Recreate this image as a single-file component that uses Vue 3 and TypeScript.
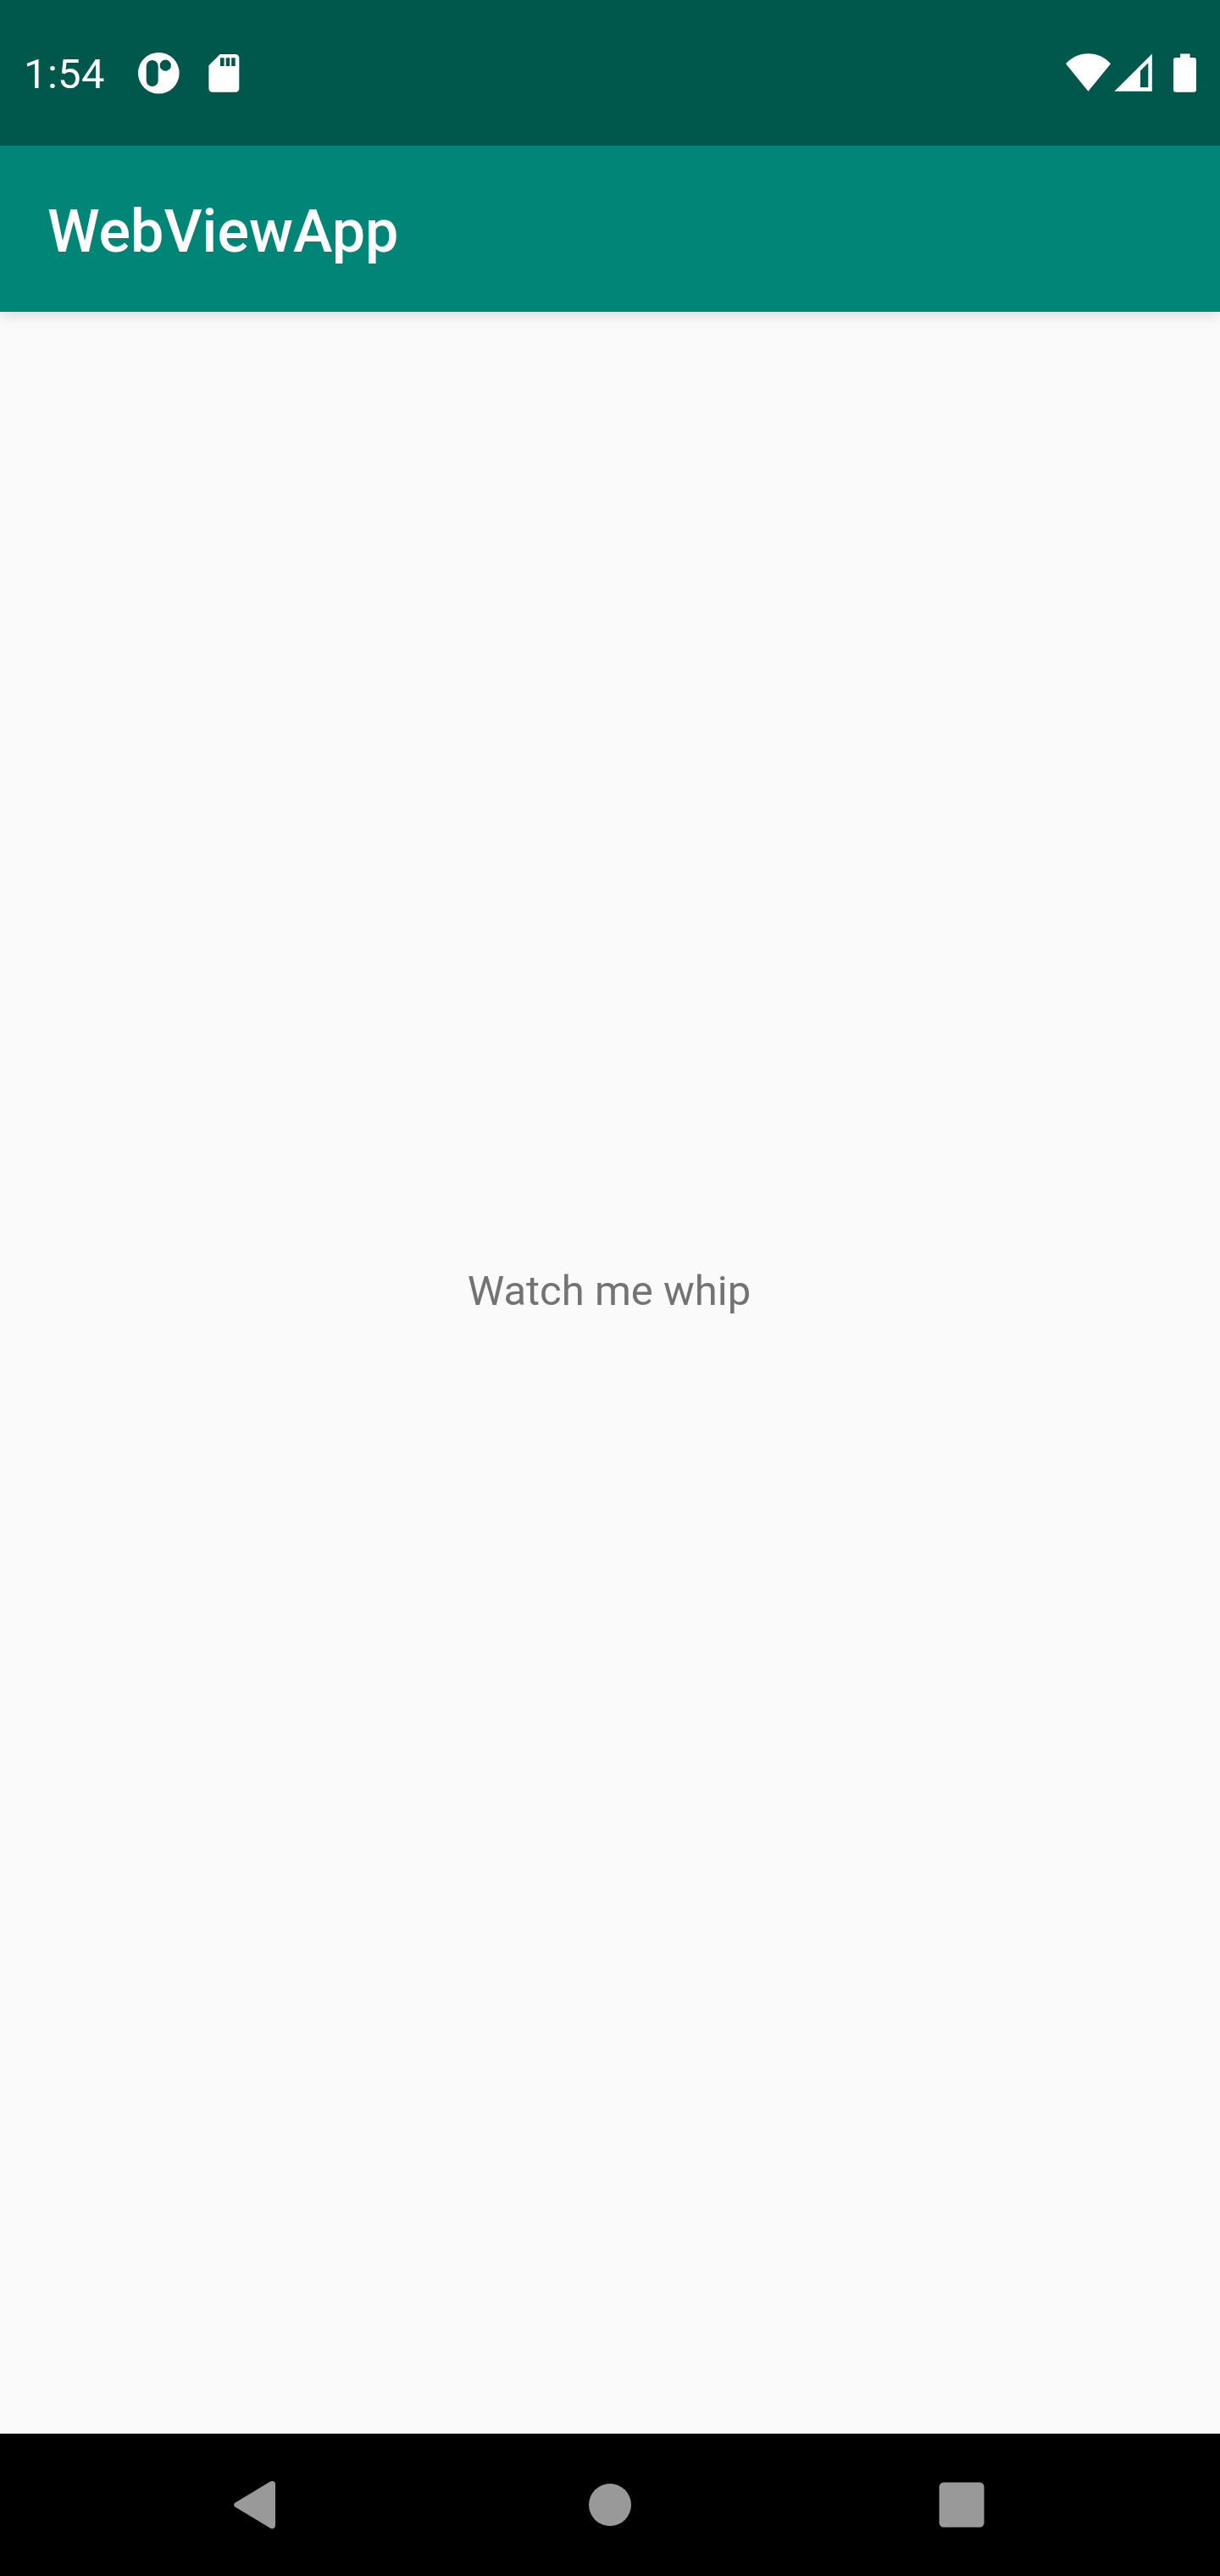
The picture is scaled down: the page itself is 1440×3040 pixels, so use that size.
<script setup lang="ts">
const time = '1:54'
const title = 'WebViewApp'
const message = 'Watch me whip'
</script>

<template>
  <div class="screen">
    <header class="status-bar">
      <div class="group">
        <span class="time">{{ time }}</span>
        <svg class="app-icon" width="50" height="50" viewBox="162 61 50 50">
          <path fill-rule="evenodd" d="M187.3 62a24.3 24.3 0 1 1 0 48.6a24.3 24.3 0 1 1 0-48.6zM179.7 71a7 7 0 0 0-7 7v17a7 7 0 0 0 14 0v-17a7 7 0 0 0-7-7zM195.3 70.6a6.6 6.6 0 1 0 0 13.2a6.6 6.6 0 1 0 0-13.2z" />
        </svg>
        <svg class="sd-icon" width="38" height="50" viewBox="245 61 38 50">
          <path fill-rule="evenodd" d="M259.7 64H278a4.3 4.3 0 0 1 4.3 4.3V104.4a4.3 4.3 0 0 1-4.3 4.3H250.7a4.3 4.3 0 0 1-4.3-4.3V77.3zM260 68.3V78h4.6V68.3zM266.7 68.3V78h4.5V68.3zM273.2 68.3V78h4.5V68.3z" />
        </svg>
      </div>
      <div class="group">
        <svg width="55" height="50" viewBox="1257 61 55 50">
          <path d="M1284.4 107.7L1258 75.2C1265 67.5 1274 63.3 1284.4 63.3S1304 67.5 1311 75.2z" />
        </svg>
        <svg class="signal-icon" width="46" height="50" viewBox="1315 61 46 50">
          <path fill-rule="evenodd" d="M1315.4 107.8L1359.8 63.4V107.8zM1346 83.6V103H1355.3V74.3z" />
        </svg>
        <svg class="battery-icon" width="29" height="50" viewBox="1384 61 29 50">
          <path d="M1393 63.4h11.6V68h4.4a3 3 0 0 1 3 3v34.7a3 3 0 0 1-3 3h-21a3 3 0 0 1-3-3V71a3 3 0 0 1 3-3h5z" />
        </svg>
      </div>
    </header>

    <div class="app-bar">
      <h1 class="title">{{ title }}</h1>
    </div>

    <main class="content">
      <p class="message">{{ message }}</p>
    </main>

    <nav class="nav-bar">
      <svg class="back" width="52" height="60" viewBox="275 2926 52 60">
        <path d="M277.6 2953.4L319 2928.6Q325 2926.5 325 2932.5V2979.5Q325 2985.5 319 2983.4L277.6 2958.6Q274.4 2956 277.6 2953.4z" />
      </svg>
      <svg class="home" width="52" height="60" viewBox="694 2926 52 60">
        <circle cx="720" cy="2956" r="25" />
      </svg>
      <svg class="recents" width="56" height="60" viewBox="1107 2926 56 60">
        <rect x="1108.6" y="2929.4" width="53" height="53" rx="5.2" />
      </svg>
    </nav>
  </div>
</template>

<style>
body {
  margin: 0;
  background: #fafafa;
}
</style>

<style scoped>
.screen {
  display: flex;
  flex-direction: column;
  width: 1440px;
  height: 3040px;
  overflow: hidden;
  background: #fafafa;
  font-family: Roboto, 'Liberation Sans', sans-serif;
}

svg {
  display: block;
  flex: none;
}

.status-bar {
  position: relative;
  z-index: 1;
  display: flex;
  flex: none;
  justify-content: space-between;
  box-sizing: border-box;
  height: 172px;
  padding: 61px 27px 0 28px;
  background: #00574b;
  color: #fff;
  fill: #fff;
}

.group {
  display: flex;
  height: 50px;
}

.time {
  width: 134px;
  font-size: 49px;
  letter-spacing: 0.35px;
  line-height: 54px;
  white-space: nowrap;
}

.sd-icon {
  margin-left: 33px;
}

.signal-icon {
  margin-left: 3px;
}

.battery-icon {
  margin-left: 23px;
}

.app-bar {
  display: flex;
  flex: none;
  align-items: center;
  box-sizing: border-box;
  height: 196px;
  padding: 6px 56px 0;
  background: #008577;
  box-shadow: 0 4px 16px rgba(0, 0, 0, 0.13);
}

.title {
  margin: 0;
  color: #fff;
  font-size: 70px;
  font-weight: 500;
  line-height: 82px;
}

.content {
  display: flex;
  flex: 1;
  align-items: center;
  justify-content: center;
  padding: 0 2px 192px 0;
}

.message {
  margin: 0;
  color: #737373;
  font-size: 49px;
  line-height: 58px;
}

.nav-bar {
  display: flex;
  flex: none;
  align-items: center;
  justify-content: space-between;
  box-sizing: border-box;
  height: 168px;
  padding: 0 277px 0 275px;
  background: #000;
  fill: #999;
}

.home {
  margin-left: 6px;
}
</style>
